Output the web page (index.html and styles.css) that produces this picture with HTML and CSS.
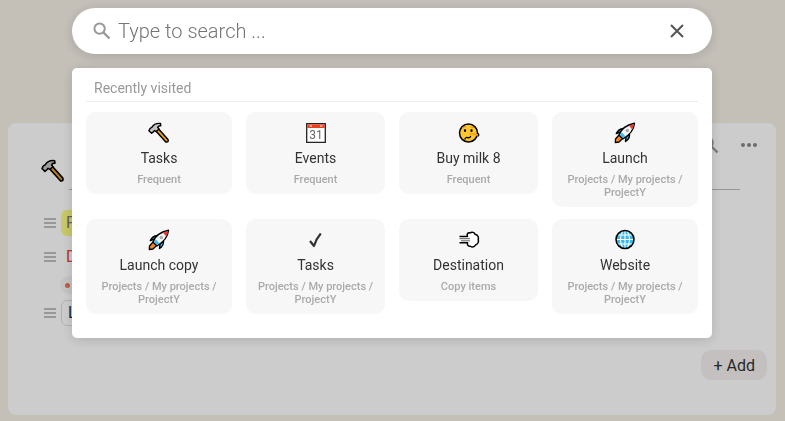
FILE: index.html
```html
<!DOCTYPE html>
<html lang="en">

<head>
    <meta charset="utf-8">
    <meta name="viewport" content="width=device-width, initial-scale=1">
    <title>Tasks</title>
    <link rel="stylesheet" href="styles.css">
</head>

<body>
    <svg class="sprite" aria-hidden="true">
        <symbol id="hammer" viewBox="0 0 22 22">
            <path d="M7 8 L9.500 5.800 L20 17.500 Q21 20.500 17.800 20 Z" fill="#f0a010" stroke="#000" stroke-width="1.500" stroke-linejoin="round" />
            <path d="M12.500 1.500 Q6.500 .8 4 5.200 L2 6.500 L.9 8.700 L3.600 11.300 L5.600 9.600 L6.500 8.500 L8.200 9.600 L11 7 L9.700 5.400 Q10.500 3.600 12.800 3.800 Z" fill="#c4c4c4" stroke="#000" stroke-width="1.400" stroke-linejoin="round" />
        </symbol>
        <symbol id="rocket" viewBox="0 0 22 22">
            <path d="M7 10 L2.300 11.500 Q4.500 7 9.500 6.500 Z M12 15 L11.500 19.500 Q15.800 17 15.500 12 Z" fill="#38bdec" stroke="#000" stroke-width="1.400" stroke-linejoin="round" />
            <path d="M5 13 L1.500 17 L1.300 20.500 L5 20 L8.700 16.500 Z" fill="#f28a20" stroke="#000" stroke-width="1.300" stroke-linejoin="round" />
            <path d="M5 13 Q8 4 20.500 1.300 Q19.500 11 9 16.800 Z" fill="#f4f4f4" stroke="#000" stroke-width="1.400" stroke-linejoin="round" />
            <path d="M14.800 3.500 L20 1.900 Q20 4.500 18.200 7.500 Z" fill="#e43b35" />
            <path d="M5.800 13 L8 10.500 L11.300 14.200 L9 16 Z" fill="#38bdec" />
            <circle cx="13.300" cy="8.500" r="1.700" fill="#aaa" />
        </symbol>
        <symbol id="magnifier" viewBox="0 0 18 18">
            <circle cx="6.600" cy="6.600" r="5.200" fill="none" stroke="currentColor" stroke-width="2" />
            <path d="M10.500 10.500 L16.500 16.500" stroke="currentColor" stroke-width="2.400" />
        </symbol>
        <symbol id="handle" viewBox="0 0 12 10">
            <path d="M0 1 H12 M0 5 H12 M0 9 H12" stroke="currentColor" stroke-width="1.300" />
        </symbol>
    </svg>

    <main class="page">
        <div class="toolbar">
            <button class="icon-btn" type="button" aria-label="Find"><svg class="tool-icon"><use href="#magnifier" /></svg></button>
            <button class="icon-btn" type="button" aria-label="More">
                <svg class="dots" viewBox="0 0 16 4"><circle cx="2" cy="2" r="2" /><circle cx="8" cy="2" r="2" /><circle cx="14" cy="2" r="2" /></svg>
            </button>
        </div>
        <header class="page-title">
            <svg class="title-icon"><use href="#hammer" /></svg>
            <div class="title-line"></div>
        </header>
        <ul class="items">
            <li class="item"><svg class="handle"><use href="#handle" /></svg><span class="name yellow">P</span></li>
            <li class="item"><svg class="handle"><use href="#handle" /></svg><span class="name red">D</span></li>
            <li class="tags"><span class="tag"></span></li>
            <li class="item"><svg class="handle"><use href="#handle" /></svg><span class="name boxed">L</span></li>
        </ul>
        <button class="add" type="button">+ Add</button>
    </main>

    <div class="overlay">
        <form class="search">
            <svg class="search-icon"><use href="#magnifier" /></svg>
            <input class="search-input" type="text" placeholder="Type to search ..." aria-label="Search">
            <button class="close" type="button" aria-label="Close">
                <svg class="close-icon" viewBox="0 0 14 14"><path d="M1 1 L13 13 M13 1 L1 13" /></svg>
            </button>
        </form>
        <section class="results">
            <h2 class="heading">Recently visited</h2>
            <div class="cards">
                <a class="card" href="#"><svg class="emoji"><use href="#hammer" /></svg><span class="card-name">Tasks</span><span class="card-path">Frequent</span></a>
                <a class="card" href="#">
                    <svg class="emoji" viewBox="0 0 22 22">
                        <path d="M1.700 1.700 H20.300 V20.300 H1.700 Z" fill="#fff" stroke="#222" stroke-width="1.300" />
                        <path d="M2.300 2.300 H19.700 V6 H2.300 Z" fill="#ea4020" />
                        <path d="M4.500 4 H7 M15 4 H17.500" stroke="#fff" stroke-width="1" />
                        <text class="cal-day" x="11" y="17" text-anchor="middle">31</text>
                    </svg>
                    <span class="card-name">Events</span><span class="card-path">Frequent</span>
                </a>
                <a class="card" href="#">
                    <svg class="emoji" viewBox="0 0 22 22">
                        <circle cx="10.500" cy="11" r="9" fill="#fcc72f" stroke="#000" stroke-width="1.500" />
                        <path d="M4.500 6 Q6 4.500 7.800 4.800 M12.500 4.800 Q14.500 4.500 16 6" fill="none" stroke="#e08a20" stroke-width="1.200" />
                        <ellipse cx="7" cy="8.500" rx="1.100" ry="1.600" fill="#000" />
                        <ellipse cx="13.500" cy="8.500" rx="1.100" ry="1.600" fill="#000" />
                        <path d="M11.500 10.800 L20 11.500 Q21.500 12.700 20 14 L12 12.800 Z" fill="#f3a51e" />
                        <path d="M19 11.200 Q22 12 20 14.200" fill="none" stroke="#000" stroke-width="1.300" />
                        <path d="M7 17 Q8 14.800 9.800 15.600 T12.500 14.500" fill="none" stroke="#000" stroke-width="1.400" stroke-linecap="round" />
                    </svg>
                    <span class="card-name">Buy milk 8</span><span class="card-path">Frequent</span>
                </a>
                <a class="card" href="#"><svg class="emoji"><use href="#rocket" /></svg><span class="card-name">Launch</span><span class="card-path">Projects / My projects / ProjectY</span></a>
                <a class="card" href="#"><svg class="emoji"><use href="#rocket" /></svg><span class="card-name">Launch copy</span><span class="card-path">Projects / My projects / ProjectY</span></a>
                <a class="card" href="#">
                    <svg class="emoji" viewBox="0 0 22 22">
                        <path d="M5 12 L9 17 Q11 10 15.800 4.500" fill="none" stroke="#333" stroke-width="2.200" stroke-linejoin="round" />
                    </svg>
                    <span class="card-name">Tasks</span><span class="card-path">Projects / My projects / ProjectY</span>
                </a>
                <a class="card" href="#">
                    <svg class="emoji" viewBox="0 0 22 22">
                        <path d="M1.500 7.500 H9.500 C8.500 5 10 3.200 12 4 C14 2.500 16.500 3.500 17 5.200 C19.500 5.800 21 8.200 20.200 10.500 C21 13 19.500 15.500 17.500 16 C16.500 18 14 18.500 12.500 17.200 C10.500 17.500 9 16 9.500 13.800 H1.500" fill="#fff" stroke="#000" stroke-width="1.500" stroke-linejoin="round" />
                        <path d="M1.500 9.700 H12 M3 11.800 H12" stroke="#333" stroke-width=".8" />
                    </svg>
                    <span class="card-name">Destination</span><span class="card-path">Copy items</span>
                </a>
                <a class="card" href="#">
                    <svg class="emoji" viewBox="0 0 22 22">
                        <circle cx="11" cy="10.500" r="9" fill="#38b9e9" />
                        <path d="M11 2 V19 M2.500 10.500 H19.500 M4 6 H18 M4 15 H18 M8.500 2.500 Q4.500 10.500 8.500 18.500 M13.500 2.500 Q17.500 10.500 13.500 18.500" fill="none" stroke="#fff" stroke-width="1.100" />
                        <circle cx="11" cy="10.500" r="9" fill="none" stroke="#000" stroke-width="1.500" />
                    </svg>
                    <span class="card-name">Website</span><span class="card-path">Projects / My projects / ProjectY</span>
                </a>
            </div>
        </section>
    </div>
</body>

</html>
```
FILE: styles.css
```css
* {
    box-sizing: border-box;
}

body {
    margin: 0;
    padding: 123px 9px 6px 8px;
    background: #f5f0e7;
    font-family: Roboto, "Liberation Sans", sans-serif;
    color: #333;
}

button {
    border: 0;
    padding: 0;
    background: none;
    font-family: inherit;
    cursor: pointer;
}

svg {
    display: block;
    flex: none;
}

.sprite {
    position: absolute;
    width: 0;
    height: 0;
}

.cal-day {
    font-size: 12px;
    fill: #666;
}

/* page under the overlay */
.page {
    display: flex;
    flex-direction: column;
    padding: 13px 9px 35px 33px;
    border-radius: 8px;
    background: #fff;
}

.toolbar {
    display: flex;
    justify-content: flex-end;
    align-items: center;
    gap: 22px;
    height: 18px;
    padding-right: 10px;
}

.icon-btn {
    color: #999;
}

.tool-icon {
    width: 18px;
    height: 18px;
}

.dots {
    width: 16px;
    height: 4px;
    fill: #888;
}

.page-title {
    display: flex;
    align-items: flex-end;
    gap: 4px;
    padding: 5px 27px 0 0;
}

.title-icon {
    width: 24px;
    height: 24px;
    margin-bottom: 7px;
}

.title-line {
    flex: 1;
    border-bottom: 1px solid #bbb;
}

.items {
    list-style: none;
    margin: 20px 0 0;
    padding: 0 0 0 3px;
}

.item {
    display: flex;
    align-items: center;
    gap: 5px;
    height: 26px;
    margin-bottom: 8px;
}

.handle {
    width: 12px;
    height: 10px;
    color: #aaa;
}

.name {
    height: 26px;
    padding: 0 5px;
    border-radius: 6px;
    font-size: 16px;
    line-height: 26px;
}

.yellow {
    background: #fafa82;
    color: #777;
}

.red {
    color: #e8432f;
}

.boxed {
    padding: 0 6px;
    border: 1px solid #ddd;
    line-height: 24px;
}

.tags {
    display: flex;
    height: 18px;
    margin: -2px 0 6px 16px;
}

.tag {
    display: flex;
    align-items: center;
    width: 40px;
    padding-left: 5px;
    border-radius: 9px;
    background: #f5f5f5;
}

.tag::before {
    content: "";
    width: 5px;
    height: 5px;
    border-radius: 50%;
    background: #f2705a;
}

.add {
    align-self: flex-end;
    height: 30px;
    margin-top: 16px;
    padding: 0 12px;
    border-radius: 10px;
    background: #f5f1ef;
    font-size: 16px;
    color: #333;
}

/* quick search */
.overlay {
    position: fixed;
    inset: 0;
    padding: 8px 9px 0 8px;
    background: rgba(0, 0, 0, .2);
}

.search,
.results {
    max-width: 640px;
    margin: 0 auto 14px;
    background: #fff;
    box-shadow: 0 2px 12px rgba(0, 0, 0, .15);
}

.search {
    display: flex;
    align-items: center;
    height: 46px;
    padding: 0 28px 0 21px;
    border-radius: 23px;
}

.search-icon {
    width: 18px;
    height: 18px;
    color: #999;
}

.search-input {
    flex: 1;
    min-width: 0;
    padding: 0 7px;
    border: 0;
    outline: 0;
    background: none;
    font-family: inherit;
    font-size: 20px;
    font-weight: 300;
}

.search-input::placeholder {
    color: #757575;
}

.close-icon {
    width: 14px;
    height: 14px;
    fill: none;
    stroke: #555;
    stroke-width: 2;
}

.results {
    padding: 7px 14px 24px;
    border-radius: 5px;
}

.heading {
    margin: 0 0 10px;
    padding: 0 8px;
    border-bottom: 1px solid #eee;
    font-size: 14px;
    font-weight: 400;
    line-height: 26px;
    color: #999;
}

.cards {
    display: grid;
    grid-template-columns: 146fr 139fr 139fr 146fr;
    align-items: start;
    gap: 12px 14px;
}

.card {
    display: flex;
    flex-direction: column;
    align-items: center;
    padding: 10px 8px 8px;
    border-radius: 10px;
    background: #f7f7f7;
    text-align: center;
    text-decoration: none;
}

.emoji {
    width: 22px;
    height: 22px;
}

.card-name {
    margin: 3px 0 4px;
    font-size: 14px;
    line-height: 22px;
    color: #333;
}

.card-path {
    font-size: 11px;
    font-weight: 500;
    line-height: 13px;
    color: #aaa;
}
```
